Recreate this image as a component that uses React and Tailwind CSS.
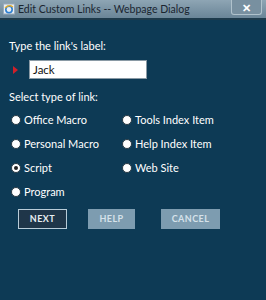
const leftCol = ['Office Macro', 'Personal Macro', 'Script', 'Program']
const rightCol = ['Tools Index Item', 'Help Index Item', 'Web Site']

function Radio({ label, checked }) {
  return (
    <div className="flex items-center h-[24px]">
      <span className="w-[10px] h-[10px] rounded-full bg-white border border-[#2a3a44] flex items-center justify-center mr-[3px]">
        {checked && <span className="w-[4px] h-[4px] rounded-full bg-[#222]" />}
      </span>
      <span>{label}</span>
    </div>
  )
}

export default function App() {
  return (
    <div className="w-[266px] h-[300px] bg-[#0d3a55] text-white overflow-hidden" style={{ fontFamily: 'Lato, "Open Sans", sans-serif' }}>
      <div className="h-[20px] flex items-center bg-gradient-to-b from-[#8ea5b4] to-[#6a8597] border-b-2 border-[#1d3a4b] relative">
        <svg width="12" height="12" viewBox="0 0 12 12" className="ml-[3px] mr-[3px]">
          <rect x="0.5" y="1" width="11" height="10" fill="#e8eef2" stroke="#9ab" />
          <circle cx="6" cy="6.5" r="3.2" fill="none" stroke="#2f7fd0" strokeWidth="1.6" />
          <path d="M2 5 Q6 1 10 4" stroke="#f0b020" strokeWidth="1.2" fill="none" />
        </svg>
        <span className="text-[10.5px] text-[#1a2530] leading-none">Edit Custom Links -- Webpage Dialog</span>
        <div className="absolute right-[4px] top-0 w-[31px] h-[15px] border border-[#b0c2cc] border-t-0 rounded-b-[3px] bg-[#7890a0] flex items-center justify-center">
          <span className="text-[11px] font-bold text-white leading-none">✕</span>
        </div>
      </div>

      <div className="px-[9px] pt-[20px] text-[11px]">
        <div className="leading-none">Type the link's label:</div>
        <div className="flex items-center mt-[9px]">
          <span className="w-0 h-0 border-y-[4px] border-y-transparent border-l-[5px] border-l-[#d0202a] ml-[4px] mr-[11px]" />
          <div className="w-[118px] h-[19px] bg-white text-[#111] text-[11.5px] flex items-center pl-[3px] border border-[#8a9aa5]">Jack</div>
        </div>
        <div className="mt-[12px] leading-none">Select type of link:</div>
        <div className="flex mt-[6px] pl-[2px]">
          <div className="w-[111px]">
            {leftCol.map(l => <Radio key={l} label={l} checked={l === 'Script'} />)}
          </div>
          <div>
            {rightCol.map(l => <Radio key={l} label={l} />)}
          </div>
        </div>
        <div className="flex mt-[5px] ml-[9px] text-[9px] font-bold tracking-wider">
          <div className="w-[49px] h-[20px] bg-[#1f3649] border border-[#b8ccd8] flex items-center justify-center text-[#e8eef2]">NEXT</div>
          <div className="w-[47px] h-[20px] bg-[#7d9cb0] flex items-center justify-center text-[#d6e2ea] ml-[21px]">HELP</div>
          <div className="w-[59px] h-[20px] bg-[#7d9cb0] flex items-center justify-center text-[#d6e2ea] ml-[26px]">CANCEL</div>
        </div>
      </div>
    </div>
  )
}
